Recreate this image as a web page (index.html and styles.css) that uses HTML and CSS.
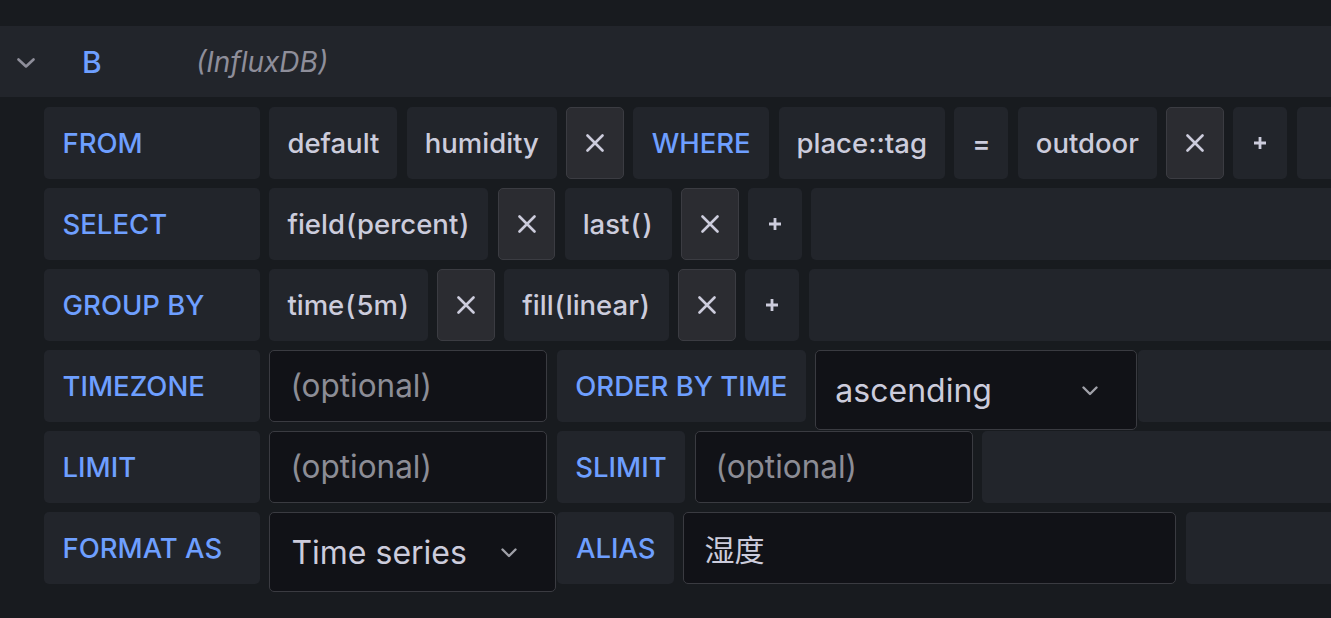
FILE: index.html
```html
<!DOCTYPE html>
<html lang="en">
<head>
<meta charset="utf-8">
<title>Query editor</title>
<link rel="stylesheet" href="styles.css">
</head>
<body>
<div class="app">
  <div class="query-header">
    <svg class="collapse-icon" width="18" height="10" viewBox="0 0 18 10"><path d="M1.5 1.5 L9 8.5 L16.5 1.5" fill="none" stroke="#8e8e9a" stroke-width="2.6" stroke-linecap="round" stroke-linejoin="round"/></svg>
    <span class="query-name">B</span>
    <span class="query-ds">(InfluxDB)</span>
  </div>

  <div class="query-rows">
    <div class="row">
      <div class="label">FROM</div>
      <div class="seg">default</div>
      <div class="seg">humidity</div>
      <div class="remove"><svg width="18" height="18" viewBox="0 0 18 18"><path d="M1.5 1.5 L16.5 16.5 M16.5 1.5 L1.5 16.5" stroke="#ccccdc" stroke-width="2.6" stroke-linecap="round"/></svg></div>
      <div class="label">WHERE</div>
      <div class="seg">place::tag</div>
      <div class="seg op">=</div>
      <div class="seg">outdoor</div>
      <div class="remove"><svg width="18" height="18" viewBox="0 0 18 18"><path d="M1.5 1.5 L16.5 16.5 M16.5 1.5 L1.5 16.5" stroke="#ccccdc" stroke-width="2.6" stroke-linecap="round"/></svg></div>
      <div class="add"><svg width="14" height="14" viewBox="0 0 14 14"><path d="M7 1 L7 13 M1 7 L13 7" stroke="#ccccdc" stroke-width="2.8"/></svg></div>
      <div class="filler"></div>
    </div>

    <div class="row">
      <div class="label">SELECT</div>
      <div class="seg">field<span class="paren">(</span>percent<span class="paren">)</span></div>
      <div class="remove"><svg width="18" height="18" viewBox="0 0 18 18"><path d="M1.5 1.5 L16.5 16.5 M16.5 1.5 L1.5 16.5" stroke="#ccccdc" stroke-width="2.6" stroke-linecap="round"/></svg></div>
      <div class="seg">last<span class="paren">(</span><span class="paren">)</span></div>
      <div class="remove"><svg width="18" height="18" viewBox="0 0 18 18"><path d="M1.5 1.5 L16.5 16.5 M16.5 1.5 L1.5 16.5" stroke="#ccccdc" stroke-width="2.6" stroke-linecap="round"/></svg></div>
      <div class="add"><svg width="14" height="14" viewBox="0 0 14 14"><path d="M7 1 L7 13 M1 7 L13 7" stroke="#ccccdc" stroke-width="2.8"/></svg></div>
      <div class="filler"></div>
    </div>

    <div class="row">
      <div class="label">GROUP BY</div>
      <div class="seg">time<span class="paren">(</span>5m<span class="paren">)</span></div>
      <div class="remove"><svg width="18" height="18" viewBox="0 0 18 18"><path d="M1.5 1.5 L16.5 16.5 M16.5 1.5 L1.5 16.5" stroke="#ccccdc" stroke-width="2.6" stroke-linecap="round"/></svg></div>
      <div class="seg">fill<span class="paren">(</span>linear<span class="paren">)</span></div>
      <div class="remove"><svg width="18" height="18" viewBox="0 0 18 18"><path d="M1.5 1.5 L16.5 16.5 M16.5 1.5 L1.5 16.5" stroke="#ccccdc" stroke-width="2.6" stroke-linecap="round"/></svg></div>
      <div class="add"><svg width="14" height="14" viewBox="0 0 14 14"><path d="M7 1 L7 13 M1 7 L13 7" stroke="#ccccdc" stroke-width="2.8"/></svg></div>
      <div class="filler"></div>
    </div>

    <div class="row">
      <div class="label">TIMEZONE</div>
      <div class="input"><span class="placeholder">(optional)</span></div>
      <div class="label">ORDER BY TIME</div>
      <div class="select select-order">
        <span class="select-value">ascending</span>
        <svg width="16" height="10" viewBox="0 0 16 10"><path d="M1.5 1.5 L8 8 L14.5 1.5" fill="none" stroke="#9fa0a8" stroke-width="2.4" stroke-linecap="round" stroke-linejoin="round"/></svg>
      </div>
      <div class="filler"></div>
    </div>

    <div class="row">
      <div class="label">LIMIT</div>
      <div class="input"><span class="placeholder">(optional)</span></div>
      <div class="label">SLIMIT</div>
      <div class="input"><span class="placeholder">(optional)</span></div>
      <div class="filler"></div>
    </div>

    <div class="row">
      <div class="label">FORMAT AS</div>
      <div class="select select-format">
        <span class="select-value">Time series</span>
        <svg width="16" height="10" viewBox="0 0 16 10"><path d="M1.5 1.5 L8 8 L14.5 1.5" fill="none" stroke="#9fa0a8" stroke-width="2.4" stroke-linecap="round" stroke-linejoin="round"/></svg>
      </div>
      <div class="label">ALIAS</div>
      <div class="input input-alias"><span class="value">湿度</span></div>
      <div class="filler"></div>
    </div>
  </div>
</div>
</body>
</html>
```

FILE: styles.css
```css
html, body {
  margin: 0;
  padding: 0;
  background: #181b1f;
  overflow: hidden;
}

body {
  width: 1331px;
  height: 618px;
  font-family: Inter, "Noto Sans", "Noto Sans CJK SC", sans-serif;
  color: #ccccdc;
}

.app {
  padding-top: 26px;
}

.query-header {
  height: 71px;
  background: #22252b;
  display: flex;
  align-items: center;
  padding-left: 17px;
}

.collapse-icon {
  flex: none;
  margin-top: 2px;
}

.query-name {
  margin-left: 47px;
  color: #6e9fff;
  font-size: 30px;
  font-weight: 500;
  width: 114px;
}

.query-ds {
  color: #8e8e9a;
  font-style: italic;
  font-size: 28px;
  font-weight: 400;
}

.query-rows {
  padding: 10px 0 0 44px;
  width: 1340px;
  display: flex;
  flex-direction: column;
  gap: 9.5px;
}

.row {
  display: flex;
  gap: 9.4px;
  height: 71.5px;
  align-items: flex-start;
}

.label,
.seg,
.add,
.filler {
  height: 71.5px;
  box-sizing: border-box;
  background: #22252b;
  border-radius: 5px;
  display: flex;
  align-items: center;
  flex: none;
  font-size: 27.5px;
  font-weight: 500;
}

.label {
  color: #6e9fff;
  padding: 0 18.5px;
  white-space: nowrap;
}

.row > .label:first-child {
  width: 216px;
}

.seg {
  padding: 0 18px;
  color: #ccccdc;
  white-space: nowrap;
}

.paren {
  margin: 0 1px;
}

.seg.op {
  width: 54px;
  justify-content: center;
  padding: 0;
}

.remove {
  flex: none;
  width: 57.5px;
  height: 71.5px;
  box-sizing: border-box;
  background: #2b2c31;
  border: 1.5px solid #3b3c42;
  border-radius: 5px;
  display: flex;
  align-items: center;
  justify-content: center;
}

.add {
  width: 54px;
  justify-content: center;
}

.filler {
  flex: 1 1 auto;
  min-width: 0;
}

.input {
  flex: none;
  width: 278px;
  height: 71.5px;
  box-sizing: border-box;
  background: #111217;
  border: 1.5px solid #3a3b41;
  border-radius: 5px;
  display: flex;
  align-items: center;
  padding: 0 20px;
  font-size: 31.5px;
}

.placeholder {
  color: #8c8d96;
}

.input-alias {
  width: 493px;
}

.input-alias .value {
  font-family: "Noto Sans CJK SC", "Noto Sans", sans-serif;
  font-size: 30px;
  color: #ccccdc;
}

.select {
  flex: none;
  height: 80px;
  box-sizing: border-box;
  background: #111217;
  border: 1.5px solid #3a3b41;
  border-radius: 5px;
  display: flex;
  align-items: center;
  padding: 0 38px 0 19px;
  margin-right: -8.4px;
  font-size: 32px;
  color: #ccccdc;
}

.select-value {
  flex: 1;
  white-space: nowrap;
}

.select svg {
  flex: none;
  margin-top: 2px;
}

.select-order {
  width: 322px;
}

.select-format {
  width: 287px;
  padding-left: 21px;
}
```
